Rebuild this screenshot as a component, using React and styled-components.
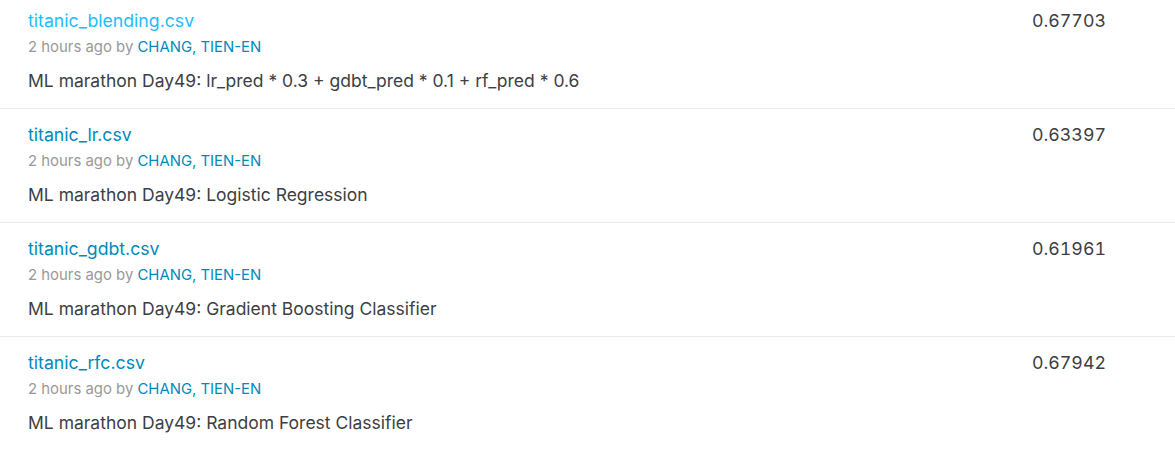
import React from "react";
import styled, { createGlobalStyle } from "styled-components";

const Global = createGlobalStyle`
  html, body { margin: 0; padding: 0; background: #fff; }
  body { font-family: Inter, "Noto Sans", sans-serif; }
`;

const List = styled.div`
  margin-top: -5px;
  width: 1175px;
`;

const Row = styled.div`
  display: grid;
  grid-template-columns: 1fr 143px;
  padding: 14px 0 15px 28px;
  border-bottom: ${(p) => (p.$last ? "none" : "1px solid #ebebeb")};
`;

const Info = styled.div`
  display: flex;
  flex-direction: column;
  align-items: flex-start;
`;

const Title = styled.a`
  font-size: 17.7px;
  line-height: 24px;
  color: ${(p) => (p.$hover ? "#20beff" : "#008abc")};
  text-decoration: none;
`;

const Meta = styled.div`
  margin-top: 4px;
  font-size: 14.9px;
  line-height: 20px;
  color: #999;
`;

const Author = styled.a`
  color: #008abc;
  text-decoration: none;
`;

const Desc = styled.div`
  margin-top: 12px;
  font-size: 17.5px;
  line-height: 24px;
  color: #3c4043;
`;

const Score = styled.div`
  font-size: 17.8px;
  line-height: 24px;
  color: #3c4043;
  font-variant-numeric: tabular-nums;
`;

const rows = [
  { file: "titanic_blending.csv", desc: "ML marathon Day49: lr_pred * 0.3 + gdbt_pred * 0.1 + rf_pred * 0.6", score: "0.67703", hover: true },
  { file: "titanic_lr.csv", desc: "ML marathon Day49: Logistic Regression", score: "0.63397" },
  { file: "titanic_gdbt.csv", desc: "ML marathon Day49: Gradient Boosting Classifier", score: "0.61961" },
  { file: "titanic_rfc.csv", desc: "ML marathon Day49: Random Forest Classifier", score: "0.67942" },
];

export default function App() {
  return (
    <>
      <Global />
      <List>
        {rows.map((r, i) => (
          <Row key={r.file} $last={i === rows.length - 1}>
            <Info>
              <Title href="#" $hover={r.hover}>{r.file}</Title>
              <Meta>
                2 hours ago by <Author href="#">CHANG, TIEN-EN</Author>
              </Meta>
              <Desc>{r.desc}</Desc>
            </Info>
            <Score>{r.score}</Score>
          </Row>
        ))}
      </List>
    </>
  );
}
